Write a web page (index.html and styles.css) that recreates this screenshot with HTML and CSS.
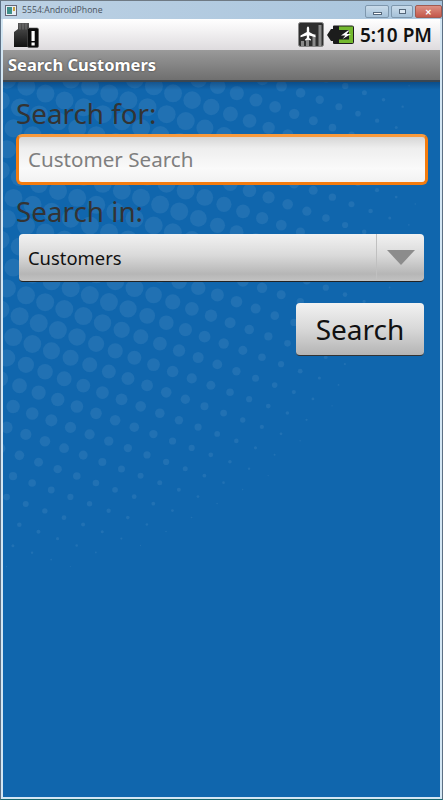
FILE: index.html
```html
<!DOCTYPE html>
<html lang="en">
<head>
  <meta charset="UTF-8" />
  <title>5554:AndroidPhone</title>
  <link rel="stylesheet" href="styles.css">
</head>
<body>
  <div class="window">
    <div class="titlebar">
      <svg class="app-icon" width="12" height="11" viewBox="0 0 12 11">
        <rect x="0.5" y="0.5" width="11" height="10" fill="#e8eef4" stroke="#667"/>
        <rect x="2" y="2" width="5" height="7" fill="#3f8f8a"/>
        <rect x="8" y="2" width="2" height="4" fill="#c8a040"/>
      </svg>
      <span class="window-name">5554:AndroidPhone</span>
      <div class="window-btns">
        <div class="win-btn min"><span class="glyph-min"></span></div>
        <div class="win-btn max"><span class="glyph-max"></span></div>
        <div class="win-btn close"><span class="glyph-x">✕</span></div>
      </div>
    </div>

    <div class="screen">
      <div class="statusbar">
        <svg class="sd-icon" width="25" height="26" viewBox="0 0 25 26">
          <defs>
            <linearGradient id="sdBack" x1="0" y1="0" x2="0" y2="1">
              <stop offset="0" stop-color="#555"/>
              <stop offset="1" stop-color="#111"/>
            </linearGradient>
          </defs>
          <path d="M4 1h11v5h-1v19H0V10l4-3z" fill="url(#sdBack)"/>
          <path d="M6 1.500v6M9 1.500v6M12 1.500v6" stroke="#777" stroke-width="1"/>
          <rect x="13.500" y="6" width="11" height="19.500" rx="1.500" fill="#0c0c0c" stroke="#555" stroke-width="0.6"/>
          <rect x="17.500" y="9" width="3.200" height="10" fill="#fff"/>
          <rect x="17.500" y="20.500" width="3.200" height="3" fill="#fff"/>
        </svg>
        <div class="status-right">
          <svg width="26" height="25" viewBox="0 0 26 25">
            <rect x="0.500" y="0.500" width="25" height="24" rx="2" fill="#2e2e2e" stroke="#888"/>
            <path d="M3 24v-5h3v5zM8 24v-7h3v7zM14.500 24V12h3v12zM20.500 24V3h3v21z" fill="#8a8a8a"/>
            <path d="M10 4.500c.8 0 1.200 1.200 1.200 2.500v3l6.300 3.500v1.800l-6.300-1.800v2.500l1.800 1.400v1l-3-.6-3 .6v-1l1.800-1.400v-2.500L2.500 15.300v-1.800L8.800 10V7c0-1.300.4-2.500 1.200-2.500z" fill="#fff"/>
          </svg>
          <svg class="batt" width="27" height="20" viewBox="0 0 27 20">
            <path d="M0 10l4-6h2V1.500a1 1 0 0 1 1-1h18a2 2 0 0 1 2 2V17a2 2 0 0 1-2 2H7a1 1 0 0 1-1-1v-2H4z" fill="#1c1c1c"/>
            <path d="M12 1.500h14v3.500H12zM12 14.500h14V18H12zM22 5h4v9.500h-4z" fill="#74b92f"/>
            <path d="M21 5.500l-7 5h4.500l-3 3.500 8.500-5h-4.500l3-3.500z" fill="#fff"/>
          </svg>
          <span class="clock">5:10 PM</span>
        </div>
      </div>

      <div class="appbar">Search Customers</div>

      <div class="content">
        <svg id="dots" class="dots" viewBox="3 82 437 714" preserveAspectRatio="xMinYMin slice"></svg>

        <div class="form">
          <label class="label">Search for:</label>
          <div class="edit">Customer Search</div>
          <label class="label label-in">Search in:</label>
          <div class="spinner">
            <span class="spinner-text">Customers</span>
            <div class="spinner-arrow">
              <svg width="28" height="16" viewBox="0 0 28 16"><path d="M0 0h28L14 15z" fill="#8c8c8c"/></svg>
            </div>
          </div>
          <div class="actions">
            <button class="search-btn">Search</button>
          </div>
        </div>
      </div>
    </div>
  </div>

  <script src="script.js"></script>
</body>
</html>
```

FILE: styles.css
```css
html, body {
  margin: 0;
  height: 100%;
  overflow: hidden;
}

body {
  font-family: "Noto Sans", "Open Sans", sans-serif;
}

.window {
  height: 800px;
  box-sizing: border-box;
  display: flex;
  flex-direction: column;
  background: #d3e6f3;
  border-top: 1px solid #6f7a84;
  border-left: 1px solid #5d7084;
  border-right: 1px solid #5d7084;
  border-bottom: 1px solid #17666f;
}

.titlebar {
  height: 18px;
  flex: none;
  display: flex;
  align-items: center;
  gap: 4px;
  padding-left: 4px;
  background: linear-gradient(90deg, #bcd1e4, #a8c4dc);
}

.window-name {
  font-family: "Open Sans", sans-serif;
  font-size: 8.700px;
  color: #4a5360;
  padding-left: 1px;
}

.window-btns {
  margin-left: auto;
  display: flex;
  gap: 2px;
  align-self: flex-start;
  padding: 4px 0 0 0;
}

.win-btn {
  height: 11px;
  box-sizing: content-box;
  display: flex;
  align-items: center;
  justify-content: center;
  border: 1px solid #7e97ad;
  border-radius: 2px;
  background: linear-gradient(#c9dbea, #a5c1d8);
}

.win-btn.min {
  width: 22px;
}

.win-btn.max {
  width: 20px;
}

.win-btn.close {
  width: 25px;
  border-color: #a05a50;
  background: linear-gradient(#dc9184, #c4574a);
}

.glyph-min {
  width: 7px;
  height: 1px;
  margin-top: 3px;
  background: #fff;
  border: 1px solid #55677a;
}

.glyph-max {
  width: 5px;
  height: 3px;
  background: #dce8f2;
  border: 1px solid #55677a;
}

.glyph-x {
  font-size: 8px;
  font-weight: bold;
  color: #fff;
  line-height: 1;
}

.screen {
  flex: 1;
  display: flex;
  flex-direction: column;
  margin: 0 2px 2px;
  background: #1066ad;
}

.statusbar {
  height: 31px;
  flex: none;
  display: flex;
  align-items: center;
  justify-content: space-between;
  padding: 0 8px 0 11px;
  background: linear-gradient(#fff, #f4f3f4 35%, #dedbde);
}

.status-right {
  display: flex;
  align-items: center;
  gap: 3px;
}

.clock {
  font-size: 19px;
  font-weight: 600;
  color: #111;
  margin-left: 3px;
}

.appbar {
  height: 32px;
  flex: none;
  box-sizing: border-box;
  padding-left: 5px;
  line-height: 30px;
  font-size: 16.500px;
  font-weight: bold;
  color: #fff;
  text-shadow: 0 0 2px #333;
  background: linear-gradient(#9a9a9a, #6f6f6f);
  border-bottom: 2px solid #3b4650;
}

.content {
  flex: 1;
  position: relative;
  overflow: hidden;
}

/* shadow the title bar drops on the wallpaper */
.content::after {
  content: "";
  position: absolute;
  top: 0;
  left: 0;
  right: 0;
  height: 8px;
  background: linear-gradient(rgba(0, 30, 70, 0.35), rgba(0, 30, 70, 0));
}

.dots {
  position: absolute;
  inset: 0;
  width: 100%;
  height: 100%;
  filter: blur(0.5px);
}

.dots circle {
  fill: #2171b3;
}

.form {
  position: relative;
  display: flex;
  flex-direction: column;
  padding: 12px 12px 0 13px;
}

.label {
  font-size: 27.800px;
  line-height: 38px;
  color: #333;
}

.label-in {
  margin-top: 7px;
}

.edit {
  height: 51px;
  box-sizing: border-box;
  margin-top: 2px;
  padding: 0 0 2px 9px;
  display: flex;
  align-items: center;
  font-size: 20.600px;
  color: #7f7f7f;
  border: 3px solid #f47c0e;
  border-top-color: #f99a3c;
  border-radius: 6px;
  background: linear-gradient(#d6d6d6, #eeeeee 25%, #fafafa 70%, #f2f2f2);
}

.spinner {
  height: 47px;
  margin: 4px 4px 0 3px;
  display: flex;
  align-items: center;
  font-size: 18.400px;
  color: #111;
  border-radius: 4px;
  background: linear-gradient(#f2f2f2, #dadada 45%, #b6b6b6 85%, #c2c2c2);
  border-bottom: 1px solid #222;
}

.spinner-text {
  flex: 1;
  padding-left: 9px;
}

.spinner-arrow {
  width: 47px;
  height: 100%;
  display: flex;
  align-items: center;
  justify-content: center;
  border-left: 1px solid #c0c0c0;
}

.actions {
  display: flex;
  justify-content: flex-end;
  margin: 21px 4px 0 0;
}

.search-btn {
  width: 128px;
  height: 53px;
  padding: 0;
  font-family: inherit;
  font-size: 28px;
  color: #111;
  border: none;
  border-radius: 4px;
  border-bottom: 1px solid #333;
  background: linear-gradient(#f2f2f2, #d8d8d8 50%, #b4b4b4);
}
```

FILE: script.js
```js
// halftone dots of the wallpaper, radius shrinks away from the left edge
const svg = document.getElementById("dots");
const NS = "http://www.w3.org/2000/svg";

function dotRadius(x, y) {
  const d = Math.hypot(x, y - 150);
  return Math.min(8 - (d - 220) * 0.037, 9);
}

for (let i = -40; i <= 40; i++) {
  for (let j = -40; j <= 40; j++) {
    const x = 26 + i * 19.1 - j * 6.4;
    const y = 295 + i * 6.9 + j * 20.85;
    if (x < -10 || x > 450 || y < 70 || y > 600) continue;
    const r = dotRadius(x, y);
    if (r < 0.5) continue;
    const c = document.createElementNS(NS, "circle");
    c.setAttribute("cx", x.toFixed(1));
    c.setAttribute("cy", y.toFixed(1));
    c.setAttribute("r", r.toFixed(1));
    svg.appendChild(c);
  }
}
```
